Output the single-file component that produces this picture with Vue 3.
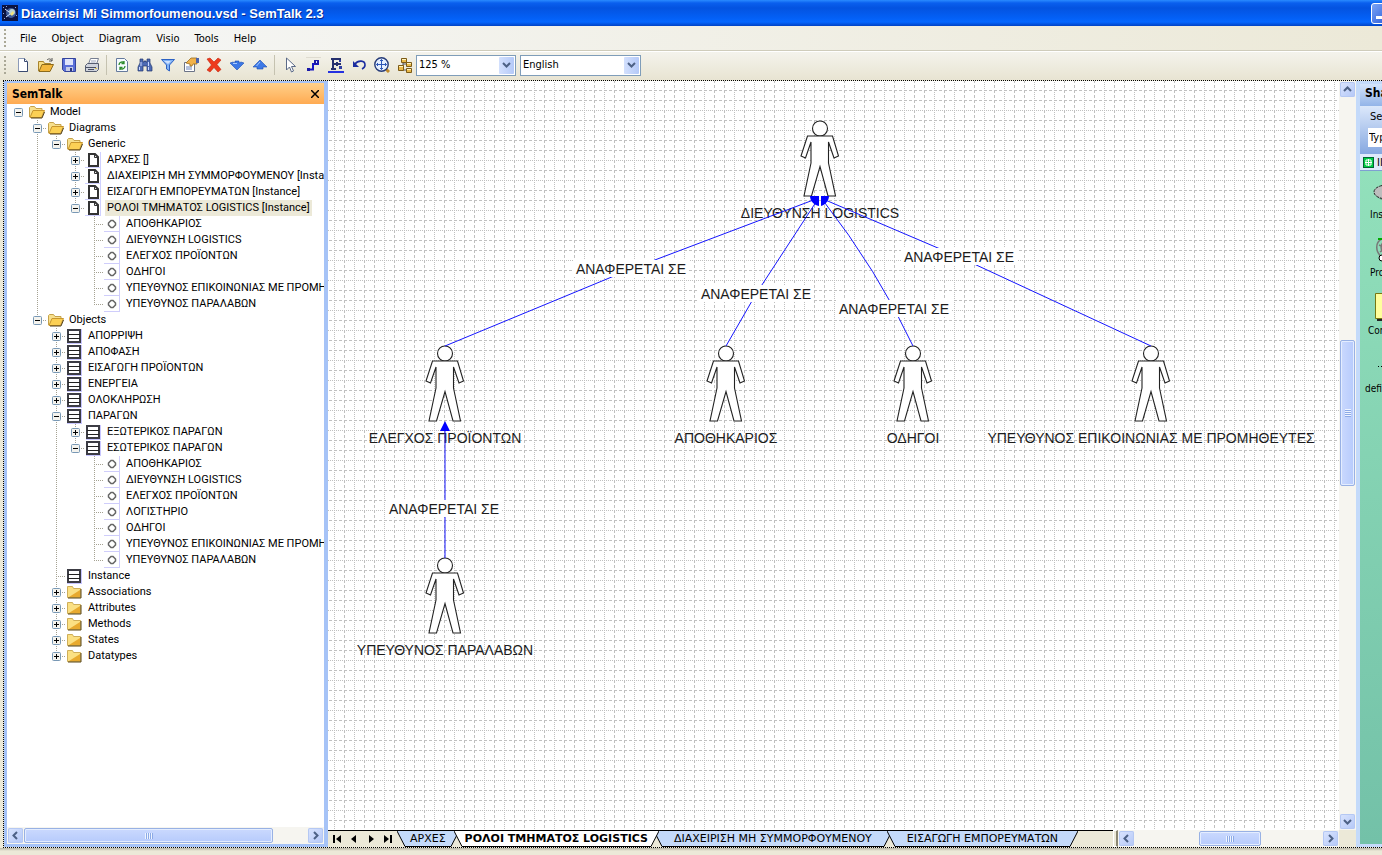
<template>
  <div class="window">
    <header class="title-bar">
      <svg class="app-icon" width="16" height="16" viewBox="0 0 16 16">
        <rect width="16" height="16" fill="#0b1240" />
        <path d="M1 2h1v1H1zM4 1h1v1H4zM13 2h1v1h-1zM2 13h1v1H2zM14 10h1v1h-1zM1 8h1v1H1z" fill="#8fa5dc" />
        <circle cx="9" cy="8" r="5" fill="#3d5a9a" />
        <circle cx="10" cy="7" r="3" fill="#b9d3d8" />
        <path d="M8 9l3-3 1 2-2 3z" fill="#f3e37a" />
        <path d="M3 4l4 3M4 12l4-3" stroke="#d8e4ff" />
      </svg>
      <h1>Diaxeirisi Mi Simmorfoumenou.vsd - SemTalk 2.3</h1>
      <button class="minimize" aria-label="Minimize"><span></span></button>
    </header>

    <nav class="menu-bar">
      <span class="grip"></span>
      <button v-for="item in menus" :key="item">{{ item }}</button>
    </nav>

    <div class="toolbar">
      <span class="grip"></span>
      <template v-for="(tool, i) in tools" :key="i">
        <span v-if="tool === '|'" class="separator"></span>
        <button v-else class="tool" :aria-label="tool">
          <svg width="16" height="16" viewBox="0 0 16 16">
            <g v-if="tool === 'New'">
              <path d="M3.500 1.500h6l3 3v10h-9z" fill="#fff" stroke="#8b9ab8" />
              <path d="M9.500 1.500v3h3M12.500 5v9.500h-9" fill="none" stroke="#3a4a70" />
            </g>
            <g v-else-if="tool === 'Open'">
              <path d="M.5 14V4.500h5l1 2h6V8" fill="#f8dd85" stroke="#a8842c" />
              <path d="M1 14.500L4 7.500h11.500l-3.500 7z" fill="#f3b73c" stroke="#8c6a1b" />
              <path d="M9 3c2-2 4-1 5 1m0-3v3h-3" fill="none" stroke="#555" />
            </g>
            <g v-else-if="tool === 'Save'">
              <path d="M1.500 1.500h13v13h-11l-2-2z" fill="#5a6fd8" stroke="#34449c" />
              <path d="M4 2h8v6H4z" fill="#dfe4fb" />
              <path d="M5 10h7v4H5z" fill="#c6cce6" />
              <path d="M9 11h2v3H9z" fill="#2b377e" />
            </g>
            <g v-else-if="tool === 'Print'">
              <path d="M4.500 7l2-5.500h8L12.500 7" fill="#fff" stroke="#777f92" />
              <path d="M7 4h5M6.500 6h5" stroke="#9aa3b8" />
              <path d="M1.500 8.500l2-2h11v6l-2 2h-11z" fill="#cfd3dc" stroke="#555d70" />
              <path d="M2 10.500h10M4 12.500h6" stroke="#4a5163" />
              <path d="M11 11h2v1h-2z" fill="#e2c44a" />
            </g>
            <g v-else-if="tool === 'Refresh'">
              <path d="M2.500 1.500h8l3 3v10h-11z" fill="#f6fbff" stroke="#65799c" />
              <path d="M5 8c0-3 4-4 5-2M10 4v2.500H7.500M11 9c0 3-4 4-5 2M6 13v-2.500h2.500" fill="none" stroke="#2b8a2b" stroke-width="1.300" />
            </g>
            <g v-else-if="tool === 'Find'">
              <path d="M3 2h3v3h1V4h2v1h1V2h3v4l2 4v4h-5V9H6v5H1v-4l2-4z" fill="#4e6bb4" stroke="#23386f" stroke-width=".7" />
              <path d="M4 5v4M2.500 10v3M11.500 5v4M11.500 10v3" stroke="#cbd9ff" />
            </g>
            <g v-else-if="tool === 'Filter'">
              <path d="M1.500 2.500h13L9.500 8v6l-3-2V8z" fill="#7fb1f5" stroke="#2d62c3" />
              <path d="M4 4h7L8 7z" fill="#cfe2ff" />
            </g>
            <g v-else-if="tool === 'Properties'">
              <path d="M1.500 5.500h10v9h-10z" fill="#fff" stroke="#6b7386" />
              <path d="M3 10h6M3 12h6" stroke="#6b84bd" />
              <path d="M3 6l5-5h6v6h-4l-1 2H7V7z" fill="#f1b24a" stroke="#9b6d20" stroke-width=".8" />
              <path d="M13 1h3v5h-3z" fill="#4d64aa" />
            </g>
            <path v-else-if="tool === 'Delete'" d="M1 2l3-1 4 4 4-4 3 2-4 4.500 4 5-3 2.500-4-4.500L4 15l-3-2 4.500-5z" fill="#ee3a1c" stroke="#c2250d" stroke-width=".6" />
            <g v-else-if="tool === 'Down'">
              <path d="M1 6l3-1 2 1V4h4v2l2-1 3 1-7 7z" fill="#3d79e6" stroke="#1d4fb4" stroke-width=".6" />
              <path d="M4 6.500h4" fill="none" stroke="#a9cbff" />
            </g>
            <g v-else-if="tool === 'Up'">
              <path d="M8 3l7 7h-4v2H5v-2H1z" fill="#3d79e6" stroke="#1d4fb4" stroke-width=".6" />
              <path d="M8 5L4.500 9" stroke="#a9cbff" />
            </g>
            <path v-else-if="tool === 'Pointer'" d="M4.500 1v12l3-3 2 5 2-1-2-4.500h4z" fill="#fff" stroke="#5b6a88" />
            <g v-else-if="tool === 'Connector'">
              <path d="M1 .5h15" stroke="#dedbd0" />
              <path d="M3 12.500h5V7h5V3" fill="none" stroke="#1717c4" stroke-width="2" />
              <path d="M2 11h3v3H2zM9 3h5v4H9z" fill="#1a1aa8" />
              <path d="M11 4h1v2h-1z" fill="#dfe4ff" />
            </g>
            <g v-else-if="tool === 'Layout'">
              <path d="M0 15h16" stroke="#2531e0" stroke-width="2" />
              <path d="M3 2h10M5 2v10M3 12h5M6 7h7M9 5v4" fill="none" stroke="#26306e" stroke-width="2" />
              <path d="M11 3h2v2h-2zM11 9h3v3h-3z" fill="#2f3fa4" />
            </g>
            <g v-else-if="tool === 'Undo'">
              <path d="M4 7c3-4 10-4 10 1 0 2-1 3-3 4" fill="none" stroke="#1c2da0" stroke-width="1.600" />
              <path d="M2 4v6h6z" fill="#1c2da0" />
            </g>
            <g v-else-if="tool === 'Zoom'">
              <path d="M11 11l4 4" stroke="#c08a2a" stroke-width="3" />
              <circle cx="7.500" cy="7.500" r="6.700" fill="#e5efff" stroke="#263b78" stroke-width="1.400" />
              <path d="M7.500 2.500v10M2.500 7.500h10M6 4l1.500-1.500L9 4M6 11l1.500 1.500L9 11M4 6L2.500 7.500 4 9M11 6l1.500 1.500L11 9" fill="none" stroke="#2d57b8" />
            </g>
            <g v-else>
              <path d="M6 4v9h4M6 7h3" fill="none" stroke="#555" />
              <path d="M4.500 1.500h5v4h-5zM9.500 5.500h5v4h-5zM9.500 11.500h5v4h-5zM1.500 8.500h5v5h-5z" fill="#e9b94a" stroke="#7c5b16" />
              <path d="M5 2h4v1H5zM10 6h4v1h-4zM10 12h4v1h-4zM2 9h4v1H2z" fill="#fff3bd" />
            </g>
          </svg>
        </button>
      </template>
      <span v-for="box in combos" :key="box.label" class="combo" :class="box.size">
        <select v-model="box.value" :aria-label="box.label">
          <option v-for="option in box.options" :key="option">{{ option }}</option>
        </select>
        <span class="combo-arrow">
          <svg width="9" height="6" viewBox="0 0 9 6"><path d="M1 1l3.500 3.500L8 1" fill="none" stroke="#4d6185" stroke-width="2" /></svg>
        </span>
      </span>
    </div>

    <div class="workspace">
      <aside class="explorer">
        <div class="panel-head">
          <h2>SemTalk</h2>
          <button aria-label="Close">
            <svg width="8" height="8" viewBox="0 0 8 8"><path d="M0 0l8 8M8 0L0 8" stroke="#000" stroke-width="1.500" /></svg>
          </button>
        </div>
        <ul class="tree">
          <li v-for="row in rows" :key="row.id" @click="selected = row.id">
            <svg v-for="(kind, i) in row.guides" :key="i" class="cell" width="19" height="16" viewBox="0 0 19 16">
              <path v-if="kind === 'line'" class="guide" d="M9.500 0v16" />
              <template v-else-if="kind === 'node'">
                <path v-if="row.depth" class="guide" :d="row.last ? 'M9.5 0v9' : 'M9.5 0v16'" />
                <path v-if="row.depth" class="guide" d="M9 8.500h10" />
                <g v-if="row.state">
                  <rect x="5.500" y="4.500" width="8" height="8" rx="1" fill="#f4f3ee" stroke="#7898b5" />
                  <path d="M7 8.500h5" stroke="#000" />
                  <path v-if="row.state === '+'" d="M9.500 6v5" stroke="#000" />
                </g>
              </template>
            </svg>
            <svg class="cell" width="19" height="16" viewBox="0 0 19 16">
              <g v-if="row.icon === 'open'">
                <path d="M1.500 13V3.500l1-1h4l1.500 2h6V7" fill="#f7e08e" stroke="#c5a24a" />
                <path d="M2 13.500L5 6.500h11.500l-3 7z" fill="#fbd055" stroke="#c8962e" />
                <path d="M3 14h11l2.500-6" fill="none" stroke="#54431a" />
              </g>
              <g v-else-if="row.icon === 'folder'">
                <path d="M1.500 13.500v-11h5l1 2h7v9z" fill="#fbe083" stroke="#cfae58" />
                <path d="M3 13L14 6v7z" fill="#e8aa2f" />
                <path d="M2 14h13V5" fill="none" stroke="#5b4717" />
              </g>
              <g v-else-if="row.icon === 'page'">
                <path d="M0 15.500h15M15.500 0v16" stroke="#cfd0ff" />
                <path d="M4 2h6l3 3v9H4z" fill="#fff" stroke="#333" stroke-width="2" />
                <path d="M9.500 2v3.500H13" fill="none" stroke="#333" />
              </g>
              <g v-else-if="row.icon === 'class'">
                <path d="M1 15.500h15M15.500 1v15" stroke="#c8c6ff" />
                <path d="M2 2h12v12H2z" fill="#fff" stroke="#3c3c44" stroke-width="2" />
                <path d="M2 6.500h12M2 10.500h12" stroke="#222" />
              </g>
              <g v-else>
                <path d="M0 15.500h15M15.500 0v16" stroke="#cfcdfb" />
                <path d="M7 4.500h2L11.500 7v2L9 11.500H7L4.500 9V7z" fill="#fff" stroke="#666" stroke-width="1.500" />
              </g>
            </svg>
            <span class="label" :class="{ selected: selected === row.id }">{{ row.label }}</span>
          </li>
        </ul>
        <div class="scroll horizontal tree-scroll">
          <button aria-label="Scroll left"><svg viewBox="0 0 9 9"><path d="M6 1L2.500 4.500 6 8" /></svg></button>
          <div class="track"><span class="thumb"></span></div>
          <button aria-label="Scroll right"><svg viewBox="0 0 9 9"><path d="M3 1l3.500 3.500L3 8" /></svg></button>
        </div>
      </aside>

      <main class="drawing">
        <div class="page-row">
          <svg class="page">
            <defs>
              <pattern id="grid" x="16" y="39" width="50" height="50" patternUnits="userSpaceOnUse">
                <path class="dashed" d="M.5 0v50M20.500 0v50M30.500 0v50M0 .5h50M0 20.500h50M0 30.500h50" />
                <path class="dotted" d="M10.500 0v50M40.500 0v50M0 10.500h50M0 40.500h50" />
              </pattern>
            </defs>
            <rect width="100%" height="100%" fill="#fff" />
            <rect width="100%" height="100%" fill="url(#grid)" />
            <g v-for="actor in actors" :key="actor.name" class="actor">
              <g :transform="`translate(${actor.x} ${actor.y})`">
                <circle cx="0" cy="7.500" r="7.500" />
                <path d="M-12.500 15h25l6 20-4.500 2-5.500-16v21l7 33h-7.500L0 45.500-8.500 75H-16l7-33V21l-5.500 16-4.500-2z" />
              </g>
              <text :x="actor.x" :y="actor.y + 97">{{ actor.name }}</text>
            </g>
            <g class="links">
              <path v-for="link in links" :key="link.d" :d="link.d" />
            </g>
            <path d="M482 115h9v10c-5-1-9-5-9-10zM493 115h8c0 5-4 9-8 10zM117 340l5 10h-10z" fill="#00f" />
            <g v-for="link in links" :key="link.d" class="link-label">
              <rect :x="link.x - 58" :y="link.y - 9" width="116" height="17" />
              <text :x="link.x" :y="link.y + 5">ΑΝΑΦΕΡΕΤΑΙ ΣΕ</text>
            </g>
          </svg>
          <div class="scroll vertical">
            <button aria-label="Scroll up"><svg viewBox="0 0 9 9"><path d="M1 6l3.500-3.500L8 6" /></svg></button>
            <div class="track"><span class="thumb"></span></div>
            <button aria-label="Scroll down"><svg viewBox="0 0 9 9"><path d="M1 3l3.500 3.500L8 3" /></svg></button>
          </div>
        </div>
        <div class="tab-row">
          <div class="page-nav">
            <button aria-label="First page"><svg viewBox="0 0 10 10"><path d="M1 1h2v8H1zM9 1v8L4 5z" /></svg></button>
            <button aria-label="Previous page"><svg viewBox="0 0 10 10"><path d="M7 1v8L2 5z" /></svg></button>
            <button aria-label="Next page"><svg viewBox="0 0 10 10"><path d="M3 1v8l5-4z" /></svg></button>
            <button aria-label="Last page"><svg viewBox="0 0 10 10"><path d="M1 1v8l5-4zM7 1h2v8H7z" /></svg></button>
          </div>
          <div class="tabs">
            <button v-for="tab in tabs" :key="tab" class="tab" :class="{ active: tab === activeTab }" @click="activeTab = tab">
              <svg width="9" height="17" viewBox="0 0 9 17"><path class="fill" d="M0 0h9v16H8z" /><path class="edge" d="M0 0l8 15.500h1" /></svg>
              <span>{{ tab }}</span>
              <svg width="9" height="17" viewBox="0 0 9 17"><path class="fill" d="M0 0h9L1 16H0z" /><path class="edge" d="M9 0L1 15.500H0" /></svg>
            </button>
          </div>
          <span class="splitter"></span>
          <div class="scroll horizontal page-scroll">
            <button aria-label="Scroll page left"><svg viewBox="0 0 9 9"><path d="M6 1L2.500 4.500 6 8" /></svg></button>
            <div class="track"><span class="thumb"></span></div>
            <button aria-label="Scroll page right"><svg viewBox="0 0 9 9"><path d="M3 1l3.500 3.500L3 8" /></svg></button>
          </div>
          <span class="corner"></span>
        </div>
      </main>

      <aside class="shapes">
        <h2>Sha</h2>
        <div class="search">
          <label for="shape-search">Se</label>
          <input id="shape-search" type="text" value="Typ">
        </div>
        <button class="stencil">
          <svg width="11" height="11" viewBox="0 0 11 11">
            <rect x=".5" y=".5" width="10" height="10" fill="#0c4" stroke="#063" />
            <path d="M3 3h5v5H3zM5.500 2v7M2 5.500h7" fill="none" stroke="#fff" />
          </svg>
          <span>II</span>
        </button>
        <ul>
          <li>
            <svg width="22" height="32" viewBox="0 0 22 32"><ellipse cx="19" cy="19" rx="13" ry="7" fill="#6a9b86" /><ellipse cx="17" cy="17" rx="13" ry="7" fill="#bdbdbd" stroke="#222" stroke-dasharray="3 1" /></svg>
            <span>Ins</span>
          </li>
          <li>
            <svg width="22" height="32" viewBox="0 0 22 32"><path d="M12 6c-7 3-7 13 0 18M15 8c-5 3-5 9-1 12M9 12l6 3-5 4" fill="none" stroke="#777" stroke-width="1.500" /><path d="M8 6h6" stroke="#0a0" stroke-width="2" /><circle cx="12" cy="25" r="3" fill="#fff" stroke="#000" /></svg>
            <span>Pro</span>
          </li>
          <li>
            <svg width="22" height="32" viewBox="0 0 22 32"><path d="M7 5h15v25H7z" fill="#222" /><path d="M5.500 2.500H22v25H5.500z" fill="#ffff9c" stroke="#777711" /></svg>
            <span>Con</span>
          </li>
          <li>
            <svg width="22" height="32" viewBox="0 0 22 32"><path d="M8 17h1v1H8zM11 17h1v1h-1zM14 17h1v1h-1z" /></svg>
            <span>defin</span>
          </li>
        </ul>
      </aside>
    </div>
    <footer class="status"></footer>
  </div>
</template>

<script setup>
import { ref, reactive } from 'vue';

const menus = ['File', 'Object', 'Diagram', 'Visio', 'Tools', 'Help'];

const tools = [
  'New', 'Open', 'Save', 'Print', '|',
  'Refresh', 'Find', 'Filter', 'Properties', 'Delete', 'Down', 'Up', '|',
  'Pointer', 'Connector', 'Layout', 'Undo', 'Zoom', 'Hierarchy',
];

const combos = reactive([
  { label: 'Zoom level', value: '125 %', options: ['125 %'], size: 'narrow' },
  { label: 'Language', value: 'English', options: ['English'], size: 'wide' },
]);

const leaf = (label) => ({ label, icon: 'instance' });
const closed = (label, icon) => ({ label, icon, state: '+' });

const model = {
  label: 'Model', icon: 'open', state: '-', children: [
    { label: 'Diagrams', icon: 'open', state: '-', children: [
      { label: 'Generic', icon: 'open', state: '-', children: [
        closed('ΑΡΧΕΣ []', 'page'),
        closed('ΔΙΑΧΕΙΡΙΣΗ ΜΗ ΣΥΜΜΟΡΦΟΥΜΕΝΟΥ [Instance]', 'page'),
        closed('ΕΙΣΑΓΩΓΗ ΕΜΠΟΡΕΥΜΑΤΩΝ [Instance]', 'page'),
        { label: 'ΡΟΛΟΙ ΤΜΗΜΑΤΟΣ LOGISTICS [Instance]', icon: 'page', state: '-', children: [
          leaf('ΑΠΟΘΗΚΑΡΙΟΣ'),
          leaf('ΔΙΕΥΘΥΝΣΗ LOGISTICS'),
          leaf('ΕΛΕΓΧΟΣ ΠΡΟΪΟΝΤΩΝ'),
          leaf('ΟΔΗΓΟΙ'),
          leaf('ΥΠΕΥΘΥΝΟΣ ΕΠΙΚΟΙΝΩΝΙΑΣ ΜΕ ΠΡΟΜΗΘΕΥΤΕΣ'),
          leaf('ΥΠΕΥΘΥΝΟΣ ΠΑΡΑΛΑΒΩΝ'),
        ] },
      ] },
    ] },
    { label: 'Objects', icon: 'open', state: '-', children: [
      closed('ΑΠΟΡΡΙΨΗ', 'class'),
      closed('ΑΠΟΦΑΣΗ', 'class'),
      closed('ΕΙΣΑΓΩΓΗ ΠΡΟΪΟΝΤΩΝ', 'class'),
      closed('ΕΝΕΡΓΕΙΑ', 'class'),
      closed('ΟΛΟΚΛΗΡΩΣΗ', 'class'),
      { label: 'ΠΑΡΑΓΩΝ', icon: 'class', state: '-', children: [
        closed('ΕΞΩΤΕΡΙΚΟΣ ΠΑΡΑΓΩΝ', 'class'),
        { label: 'ΕΣΩΤΕΡΙΚΟΣ ΠΑΡΑΓΩΝ', icon: 'class', state: '-', children: [
          leaf('ΑΠΟΘΗΚΑΡΙΟΣ'),
          leaf('ΔΙΕΥΘΥΝΣΗ LOGISTICS'),
          leaf('ΕΛΕΓΧΟΣ ΠΡΟΪΟΝΤΩΝ'),
          leaf('ΛΟΓΙΣΤΗΡΙΟ'),
          leaf('ΟΔΗΓΟΙ'),
          leaf('ΥΠΕΥΘΥΝΟΣ ΕΠΙΚΟΙΝΩΝΙΑΣ ΜΕ ΠΡΟΜΗΘΕΥΤΕΣ'),
          leaf('ΥΠΕΥΘΥΝΟΣ ΠΑΡΑΛΑΒΩΝ'),
        ] },
      ] },
      { label: 'Instance', icon: 'class' },
      closed('Associations', 'folder'),
      closed('Attributes', 'folder'),
      closed('Methods', 'folder'),
      closed('States', 'folder'),
      closed('Datatypes', 'folder'),
    ] },
  ],
};

// Flattens the tree; guides holds one cell per level, the last one is the node itself
const rows = [];
function flatten(node, parents, last) {
  rows.push({
    ...node,
    id: rows.length,
    depth: parents.length,
    last,
    guides: [...parents, 'node'],
  });
  const children = node.children || [];
  children.forEach((child, i) => {
    flatten(child, [...parents, last ? 'none' : 'line'], i === children.length - 1);
  });
}
flatten(model, [], true);

const selected = ref(rows.find((row) => row.label.startsWith('ΡΟΛΟΙ')).id);

const actors = [
  { name: 'ΔΙΕΥΘΥΝΣΗ LOGISTICS', x: 492, y: 40 },
  { name: 'ΕΛΕΓΧΟΣ ΠΡΟΪΟΝΤΩΝ', x: 117, y: 265 },
  { name: 'ΑΠΟΘΗΚΑΡΙΟΣ', x: 398, y: 265 },
  { name: 'ΟΔΗΓΟΙ', x: 585, y: 265 },
  { name: 'ΥΠΕΥΘΥΝΟΣ ΕΠΙΚΟΙΝΩΝΙΑΣ ΜΕ ΠΡΟΜΗΘΕΥΤΕΣ', x: 823, y: 265 },
  { name: 'ΥΠΕΥΘΥΝΟΣ ΠΑΡΑΛΑΒΩΝ', x: 117, y: 477 },
];

const links = [
  { d: 'M117 265L303 188 488 118', x: 303, y: 188 },
  { d: 'M398 265L428 213 490 118', x: 428, y: 213 },
  { d: 'M585 265Q550 190 494 118', x: 566, y: 228 },
  { d: 'M823 265L631 176 495 118', x: 631, y: 176 },
  { d: 'M117 477V345', x: 116, y: 428 },
];

const tabs = ['ΑΡΧΕΣ', 'ΡΟΛΟΙ ΤΜΗΜΑΤΟΣ LOGISTICS', 'ΔΙΑΧΕΙΡΙΣΗ ΜΗ ΣΥΜΜΟΡΦΟΥΜΕΝΟΥ', 'ΕΙΣΑΓΩΓΗ ΕΜΠΟΡΕΥΜΑΤΩΝ'];
const activeTab = ref('ΡΟΛΟΙ ΤΜΗΜΑΤΟΣ LOGISTICS');
</script>

<style>
html,
body {
  margin: 0;
  background: #ece9d8;
}
</style>

<style scoped>
.window {
  display: flex;
  flex-direction: column;
  height: 100vh;
  min-height: 600px;
  overflow: hidden;
  font-family: "DejaVu Sans Condensed", "DejaVu Sans", sans-serif;
  font-size: 11px;
  color: #000;
}

button {
  font: inherit;
  color: inherit;
  border: 0;
  padding: 0;
  background: none;
}

h1,
h2,
ul {
  margin: 0;
  padding: 0;
}

ul {
  list-style: none;
}

svg {
  display: block;
  flex: none;
}

/* Title bar */
.title-bar {
  flex: none;
  display: flex;
  align-items: center;
  height: 26px;
  padding-left: 2px;
  gap: 3px;
  overflow: hidden;
  background: linear-gradient(#2a8bff 0, #0a5fee 3px, #0453e0 8px, #0360f6 18px, #0567ff 22px, #0142c4 26px);
}

.title-bar h1 {
  flex: 1;
  font-family: "Liberation Sans", sans-serif;
  font-size: 13px;
  font-weight: bold;
  color: #fff;
  text-shadow: 1px 1px 0 #0a2a90;
  white-space: nowrap;
}

.minimize {
  flex: none;
  display: flex;
  align-items: flex-end;
  width: 21px;
  height: 21px;
  margin-right: -10px;
  padding: 4px;
  border: 1px solid #fff;
  border-radius: 3px;
  box-sizing: border-box;
  background: linear-gradient(135deg, #7ba4f5, #2658d8);
}

.minimize span {
  width: 8px;
  height: 3px;
  background: #fff;
}

/* Menu and toolbar */
.menu-bar,
.toolbar {
  flex: none;
  display: flex;
  align-items: center;
}

.menu-bar {
  height: 25px;
  gap: 15px;
  background: linear-gradient(90deg, #f6f7f7, #ece9d8);
  border-bottom: 1px solid #cfccbb;
  box-sizing: border-box;
}

.toolbar {
  height: 29px;
  padding-bottom: 2px;
  border-top: 1px solid #fff;
  box-sizing: border-box;
  background: linear-gradient(#f4f3ec, #e8e4d2);
}

.grip {
  flex: none;
  width: 3px;
  height: 18px;
  margin-left: 4px;
  background: repeating-linear-gradient(#aaa897 0 2px, transparent 2px 4px);
  background-size: 2px 100%;
  background-repeat: no-repeat;
}

.menu-bar .grip {
  margin-right: -2px;
}

.toolbar .grip {
  margin-right: 4px;
}

.separator {
  width: 1px;
  height: 20px;
  margin: 0 3px;
  background: #c5c2b0;
}

.tool {
  display: flex;
  align-items: center;
  justify-content: center;
  width: 23px;
  height: 23px;
}

.combo {
  position: relative;
  height: 21px;
  margin-right: 4px;
}

.combo.narrow {
  width: 100px;
}

.combo.wide {
  width: 121px;
}

.combo select {
  width: 100%;
  height: 100%;
  padding: 0 20px 2px 2px;
  border: 1px solid #7f9db9;
  border-radius: 0;
  box-sizing: border-box;
  appearance: none;
  background: #fff;
  font: inherit;
  color: #000;
}

.combo-arrow {
  position: absolute;
  top: 2px;
  right: 2px;
  display: flex;
  align-items: center;
  justify-content: center;
  width: 15px;
  height: 17px;
  border-radius: 1px;
  background: linear-gradient(90deg, #d3e0fd, #b4c9f8);
  pointer-events: none;
}

/* Work area */
.workspace {
  flex: 1;
  display: flex;
  min-height: 0;
  margin-left: 3px;
  border: 1px dotted #000;
  border-right: 0;
}

.explorer {
  flex: none;
  display: flex;
  flex-direction: column;
  width: 324px;
  padding: 2px 4px 3px 3px;
  box-sizing: border-box;
  background: #a6c3f7;
}

.panel-head {
  flex: none;
  display: flex;
  align-items: center;
  justify-content: space-between;
  height: 21px;
  padding: 0 5px;
  background: linear-gradient(#ffd08a, #ffab52);
}

.panel-head h2,
.shapes h2 {
  font-size: 12px;
  font-weight: bold;
}

.tree {
  flex: 1;
  min-height: 0;
  padding-left: 2px;
  overflow: hidden;
  background: #fff;
  font-family: Roboto, "Liberation Sans", sans-serif;
}

.tree li {
  display: flex;
  align-items: center;
  height: 16px;
  white-space: nowrap;
  cursor: default;
}

.guide {
  fill: none;
  stroke: #a5a292;
  stroke-dasharray: 1 1;
}

.label {
  margin-left: 1px;
  padding: 0 2px;
  line-height: 16px;
}

.label.selected {
  background: #ece9d8;
}

/* Scroll bars */
.scroll {
  display: flex;
  background: #f6f5f0;
}

.scroll.vertical {
  flex: none;
  flex-direction: column;
  width: 17px;
}

.scroll.horizontal {
  height: 17px;
}

.scroll button {
  flex: none;
  display: flex;
  align-items: center;
  justify-content: center;
  width: 15px;
  height: 15px;
  margin: 1px;
  border-radius: 2px;
  background: linear-gradient(135deg, #dbe5fe, #b3c7f7);
  box-shadow: inset 0 0 0 1px #b5c8f3;
}

.scroll button svg {
  width: 9px;
  height: 9px;
  fill: none;
  stroke: #4d6185;
  stroke-width: 2;
}

.track {
  flex: 1;
  display: flex;
  min-width: 0;
  min-height: 0;
}

.vertical .track {
  flex-direction: column;
}

.thumb {
  border: 1px solid #98b1e4;
  border-radius: 2px;
  box-sizing: border-box;
  box-shadow: inset 0 0 0 1px #e4edff;
}

.horizontal .thumb {
  height: 15px;
  margin-top: 1px;
  background:
    repeating-linear-gradient(90deg, #eef4ff 0 1px, #8caae6 1px 2px) center / 8px 6px no-repeat,
    linear-gradient(#cad9fe, #b7cbfc);
}

.vertical .thumb {
  width: 15px;
  height: 146px;
  margin: 242px 0 0 1px;
  background:
    repeating-linear-gradient(#eef4ff 0 1px, #8caae6 1px 2px) center / 6px 8px no-repeat,
    linear-gradient(90deg, #cad9fe, #b7cbfc);
}

.tree-scroll {
  flex: none;
}

.tree-scroll .thumb {
  width: 88%;
}

/* Drawing page */
.drawing {
  flex: 1;
  display: flex;
  flex-direction: column;
  min-width: 0;
}

.page-row {
  flex: 1;
  display: flex;
  min-height: 0;
}

.page {
  flex: 1;
  min-width: 0;
  height: 100%;
}

.page text {
  font-family: "Liberation Sans", Arial, sans-serif;
  font-size: 14px;
  fill: #1c1c1c;
  text-anchor: middle;
}

.dashed,
.dotted {
  fill: none;
  stroke: #c0c0c0;
}

.dashed {
  stroke-dasharray: 3 2;
}

.dotted {
  stroke-dasharray: 1 1;
}

.actor circle,
.actor path {
  fill: #fff;
  stroke: #222;
  stroke-width: 1.1;
}

.links path {
  fill: none;
  stroke: #1414ff;
}

.link-label rect {
  fill: #fff;
}

/* Page tabs */
.tab-row {
  flex: none;
  display: flex;
  height: 17px;
  background: #ece9d8;
}

.page-nav {
  flex: none;
  display: flex;
  border-top: 1px solid #000;
}

.page-nav button {
  display: flex;
  align-items: center;
  justify-content: center;
  width: 17px;
}

.page-nav svg {
  width: 10px;
  height: 10px;
}

.tabs {
  flex: 1;
  display: flex;
  min-width: 0;
  padding-left: 1px;
  overflow: hidden;
  border-top: 1px solid #000;
}

.tab {
  flex: none;
  display: flex;
  margin-right: -5px;
  font-family: "DejaVu Sans", sans-serif;
}

.tab span {
  height: 16px;
  padding: 0 4px;
  box-sizing: border-box;
  border-bottom: 1px solid #000;
  background: #c4dafa;
  line-height: 15px;
  white-space: nowrap;
}

.tab .fill {
  fill: #c4dafa;
}

.tab .edge {
  fill: none;
  stroke: #000;
}

.tab.active {
  z-index: 1;
  font-weight: bold;
}

.tab.active span {
  padding: 0 2px;
  background: #fff;
}

.tab.active ~ .tab span {
  padding: 0 11px;
}

.tab.active .fill {
  fill: #fff;
}

.splitter {
  flex: none;
  width: 5px;
  border: 1px solid #fff;
  border-right: 2px solid #8c8873;
  box-sizing: border-box;
}

.page-scroll {
  flex: none;
  width: 221px;
}

.page-scroll .thumb {
  width: 62px;
  margin-left: 64px;
}

.corner {
  flex: none;
  width: 17px;
}

/* Shapes pane */
.shapes {
  flex: none;
  display: flex;
  flex-direction: column;
  width: 26px;
  padding: 3px 0 3px 4px;
  box-sizing: border-box;
  overflow: hidden;
  background: #c4dafa;
  white-space: nowrap;
}

.shapes h2 {
  height: 22px;
  padding-left: 5px;
  line-height: 19px;
  background: linear-gradient(#d5e4fb, #93b4e8);
}

.search {
  height: 48px;
  background: linear-gradient(#dce8fb, #86a8e0);
}

.search label {
  display: block;
  padding-left: 10px;
  line-height: 22px;
}

.search input {
  width: 100%;
  height: 19px;
  margin-left: 8px;
  padding: 0 1px;
  border: 0;
  background: #fff;
  font: inherit;
}

.stencil {
  flex: none;
  display: flex;
  align-items: center;
  gap: 3px;
  height: 17px;
  padding-left: 3px;
  border-bottom: 1px solid #7f9fd2;
  background: #dfeafb;
}

.shapes ul {
  flex: 1;
  padding-top: 4px;
  background: linear-gradient(#92e0bb, #73c1a8);
  font-size: 10px;
}

.shapes li {
  display: flex;
  flex-direction: column;
  height: 58px;
  padding-left: 5px;
}

.shapes li svg {
  margin-left: 5px;
}

.shapes li span {
  padding-left: 5px;
  line-height: 16px;
}

.shapes li:nth-child(3) span {
  padding-left: 3px;
}

.shapes li:nth-child(4) span {
  padding-left: 0;
}

.status {
  flex: none;
  height: 7px;
  background: linear-gradient(#b7b4a4, #ece9d8 3px);
}
</style>
